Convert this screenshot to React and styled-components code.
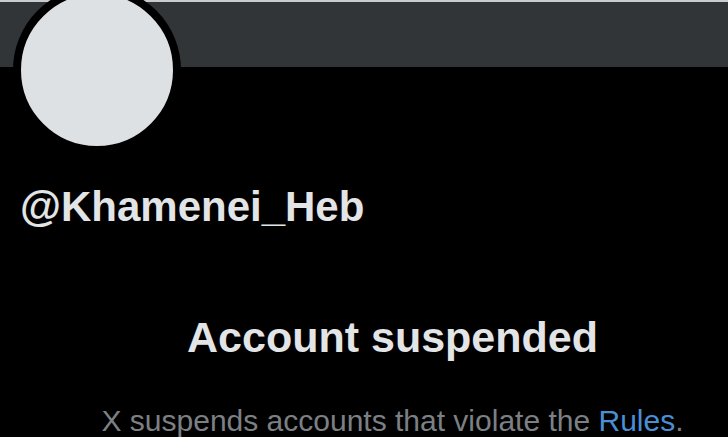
import React from "react";
import styled, { createGlobalStyle } from "styled-components";

const Global = createGlobalStyle`
  html, body { margin: 0; padding: 0; background: #000; }
  body { font-family: "Liberation Sans", Arial, sans-serif; }
`;

const Page = styled.div`
  width: 728px;
  height: 437px;
  background: #000;
  overflow: hidden;
  display: flex;
  flex-direction: column;
`;

const TopLine = styled.div`
  height: 2px;
  background: #c9cbcd;
  flex-shrink: 0;
`;

const Banner = styled.div`
  height: 65px;
  background: #323538;
  flex-shrink: 0;
`;

const Profile = styled.div`
  display: flex;
  flex-direction: column;
  padding-left: 13px;
`;

const Avatar = styled.div`
  position: relative;
  margin-top: -81px;
  width: 152px;
  height: 152px;
  border-radius: 50%;
  background: #dde1e4;
  border: 8px solid #000;
`;

const Handle = styled.div`
  margin-top: 28px;
  padding-left: 7px;
  font-size: 42px;
  line-height: 50px;
  font-weight: 700;
  color: #e2e4e6;
`;

const Message = styled.div`
  margin-top: 80px;
  padding-left: 57px;
  display: flex;
  flex-direction: column;
  align-items: center;
  text-align: center;
`;

const Title = styled.div`
  font-size: 43px;
  line-height: 50px;
  font-weight: 700;
  color: #e2e4e6;
`;

const Sub = styled.div`
  margin-top: 41px;
  font-size: 30px;
  line-height: 36px;
  color: #7c8084;
  white-space: nowrap;
`;

const Link = styled.span`
  color: #4a8fd4;
`;

export default function App() {
  return (
    <>
      <Global />
      <Page>
        <TopLine />
        <Banner />
        <Profile>
          <Avatar />
          <Handle>@Khamenei_Heb</Handle>
        </Profile>
        <Message>
          <Title>Account suspended</Title>
          <Sub>
            X suspends accounts that violate the <Link>Rules</Link>.
          </Sub>
        </Message>
      </Page>
    </>
  );
}
